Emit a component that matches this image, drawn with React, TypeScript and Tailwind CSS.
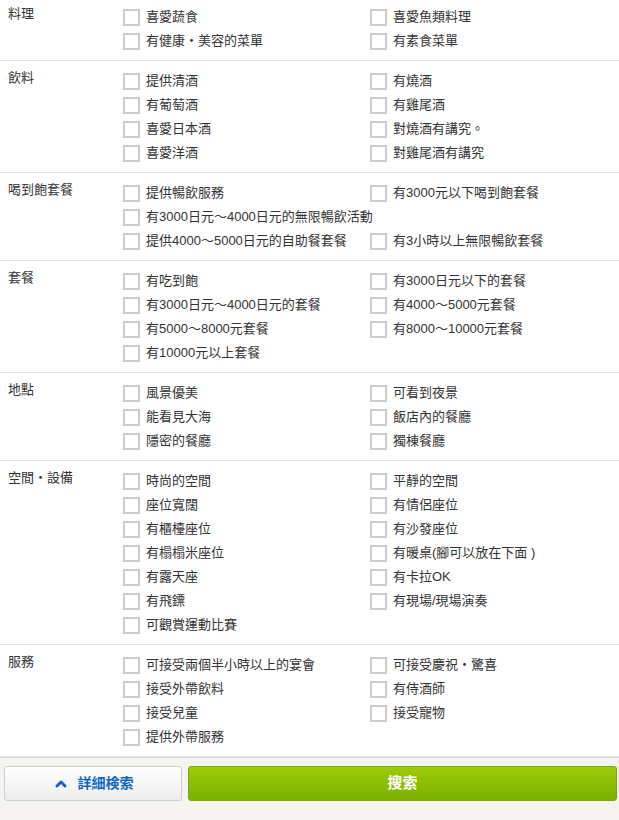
import { ChevronUp } from "lucide-react"

type Item = { text: string; span?: boolean }

const sections: { label: string; items: Item[]; first?: boolean }[] = [
  {
    label: "料理",
    first: true,
    items: [{ text: "喜愛蔬食" }, { text: "喜愛魚類料理" }, { text: "有健康・美容的菜單" }, { text: "有素食菜單" }],
  },
  {
    label: "飲料",
    items: [
      { text: "提供清酒" },
      { text: "有燒酒" },
      { text: "有葡萄酒" },
      { text: "有雞尾酒" },
      { text: "喜愛日本酒" },
      { text: "對燒酒有講究。" },
      { text: "喜愛洋酒" },
      { text: "對雞尾酒有講究" },
    ],
  },
  {
    label: "喝到飽套餐",
    items: [
      { text: "提供暢飲服務" },
      { text: "有3000元以下喝到飽套餐" },
      { text: "有3000日元～4000日元的無限暢飲活動", span: true },
      { text: "提供4000～5000日元的自助餐套餐" },
      { text: "有3小時以上無限暢飲套餐" },
    ],
  },
  {
    label: "套餐",
    items: [
      { text: "有吃到飽" },
      { text: "有3000日元以下的套餐" },
      { text: "有3000日元～4000日元的套餐" },
      { text: "有4000～5000元套餐" },
      { text: "有5000～8000元套餐" },
      { text: "有8000～10000元套餐" },
      { text: "有10000元以上套餐" },
    ],
  },
  {
    label: "地點",
    items: [
      { text: "風景優美" },
      { text: "可看到夜景" },
      { text: "能看見大海" },
      { text: "飯店內的餐廳" },
      { text: "隱密的餐廳" },
      { text: "獨棟餐廳" },
    ],
  },
  {
    label: "空間・設備",
    items: [
      { text: "時尚的空間" },
      { text: "平靜的空間" },
      { text: "座位寬闊" },
      { text: "有情侶座位" },
      { text: "有櫃檯座位" },
      { text: "有沙發座位" },
      { text: "有榻榻米座位" },
      { text: "有暖桌(腳可以放在下面 )" },
      { text: "有露天座" },
      { text: "有卡拉OK" },
      { text: "有飛鏢" },
      { text: "有現場/現場演奏" },
      { text: "可觀賞運動比賽" },
    ],
  },
  {
    label: "服務",
    items: [
      { text: "可接受兩個半小時以上的宴會" },
      { text: "可接受慶祝・驚喜" },
      { text: "接受外帶飲料" },
      { text: "有侍酒師" },
      { text: "接受兒童" },
      { text: "接受寵物" },
      { text: "提供外帶服務" },
    ],
  },
]

const font = { fontFamily: '"Liberation Sans", "Noto Sans CJK TC", sans-serif' }

export default function App() {
  return (
    <div className="w-[619px] min-h-[820px] bg-white text-[#333] flex flex-col" style={font}>
      <div>
        {sections.map((s) => (
          <div
            key={s.label}
            className={`flex border-b border-[#e5e5e5] pb-[7px] ${s.first ? "pt-[5px]" : "pt-2"}`}
          >
            <div className="w-[123px] shrink-0 pl-2 text-[13px] leading-[18px]">{s.label}</div>
            <div className="grid grid-cols-[247px_1fr] flex-1">
              {s.items.map((it) => (
                <label
                  key={it.text}
                  className={`flex h-6 items-center gap-[6px] text-[13px] whitespace-nowrap ${it.span ? "col-span-2" : ""}`}
                >
                  <span className="h-[17px] w-[17px] shrink-0 border-2 border-[#cccccc] bg-white" />
                  <span>{it.text}</span>
                </label>
              ))}
            </div>
          </div>
        ))}
      </div>

      <div className="flex-1 border-t border-[#d4d4d4] bg-[#f5f4f0] pl-1 pr-[2px] pt-2">
        <div className="flex gap-[6px]">
          <button className="flex h-[35px] w-[178px] items-center justify-center gap-[9px] rounded-[3px] border border-[#cfcfcf] bg-gradient-to-b from-white to-[#ededed] text-[14px] font-bold text-[#1166c4]">
            <ChevronUp className="h-4 w-4" strokeWidth={4.5} />
            詳細検索
          </button>
          <button className="flex h-[35px] flex-1 items-center justify-center rounded-[3px] border border-[#7aa813] bg-gradient-to-b from-[#9ccc08] to-[#7cb000] text-[15px] font-bold text-white">
            搜索
          </button>
        </div>
      </div>
    </div>
  )
}
